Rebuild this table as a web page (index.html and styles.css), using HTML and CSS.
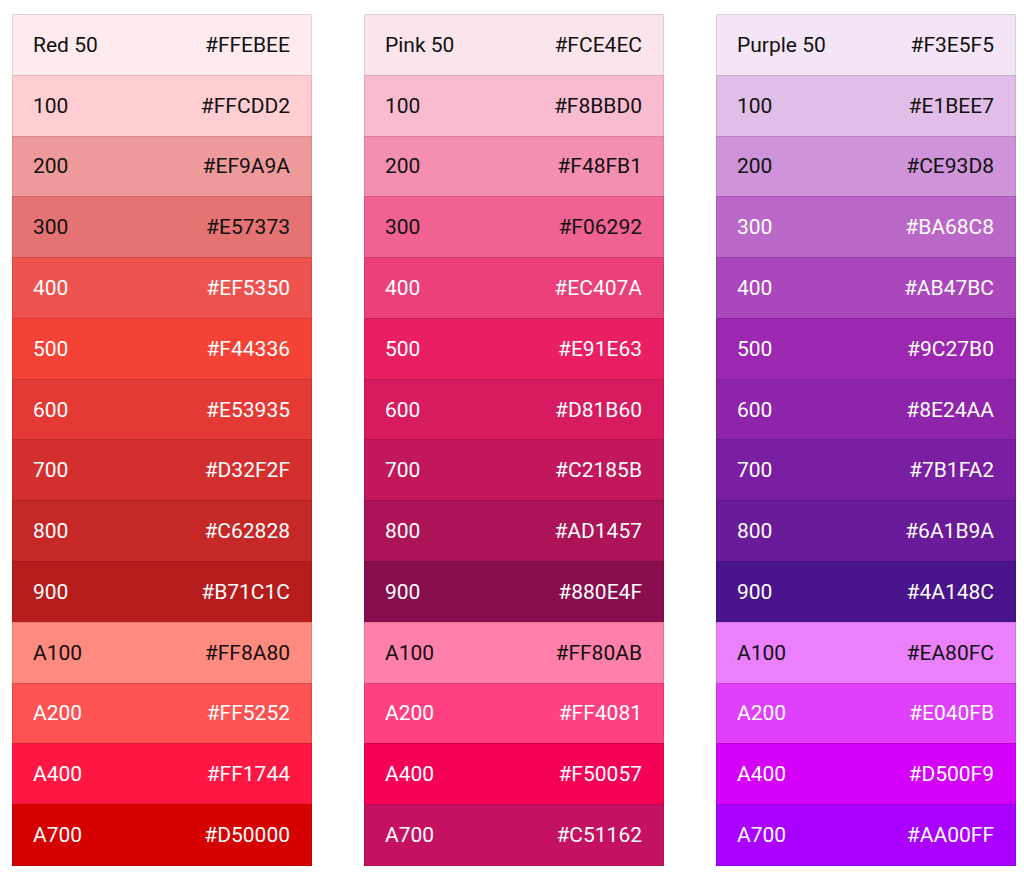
FILE: index.html
```html
<!DOCTYPE html>
<html lang="en">
<head>
    <meta charset="UTF-8">
    <meta name="viewport" content="width=device-width, initial-scale=1.0">
    <title>Material Colors</title>
    <link rel="stylesheet" href="styles.css">
</head>
<body>

    <div class="palette">
        <div class="column">
            <div class="swatch dark" style="background: #FFEBEE"><span>Red 50</span><span>#FFEBEE</span></div>
            <div class="swatch dark" style="background: #FFCDD2"><span>100</span><span>#FFCDD2</span></div>
            <div class="swatch dark" style="background: #EF9A9A"><span>200</span><span>#EF9A9A</span></div>
            <div class="swatch dark" style="background: #E57373"><span>300</span><span>#E57373</span></div>
            <div class="swatch light" style="background: #EF5350"><span>400</span><span>#EF5350</span></div>
            <div class="swatch light" style="background: #F44336"><span>500</span><span>#F44336</span></div>
            <div class="swatch light" style="background: #E53935"><span>600</span><span>#E53935</span></div>
            <div class="swatch light" style="background: #D32F2F"><span>700</span><span>#D32F2F</span></div>
            <div class="swatch light" style="background: #C62828"><span>800</span><span>#C62828</span></div>
            <div class="swatch light" style="background: #B71C1C"><span>900</span><span>#B71C1C</span></div>
            <div class="swatch dark" style="background: #FF8A80"><span>A100</span><span>#FF8A80</span></div>
            <div class="swatch light" style="background: #FF5252"><span>A200</span><span>#FF5252</span></div>
            <div class="swatch light" style="background: #FF1744"><span>A400</span><span>#FF1744</span></div>
            <div class="swatch light" style="background: #D50000"><span>A700</span><span>#D50000</span></div>
        </div>

        <div class="column">
            <div class="swatch dark" style="background: #FCE4EC"><span>Pink 50</span><span>#FCE4EC</span></div>
            <div class="swatch dark" style="background: #F8BBD0"><span>100</span><span>#F8BBD0</span></div>
            <div class="swatch dark" style="background: #F48FB1"><span>200</span><span>#F48FB1</span></div>
            <div class="swatch dark" style="background: #F06292"><span>300</span><span>#F06292</span></div>
            <div class="swatch light" style="background: #EC407A"><span>400</span><span>#EC407A</span></div>
            <div class="swatch light" style="background: #E91E63"><span>500</span><span>#E91E63</span></div>
            <div class="swatch light" style="background: #D81B60"><span>600</span><span>#D81B60</span></div>
            <div class="swatch light" style="background: #C2185B"><span>700</span><span>#C2185B</span></div>
            <div class="swatch light" style="background: #AD1457"><span>800</span><span>#AD1457</span></div>
            <div class="swatch light" style="background: #880E4F"><span>900</span><span>#880E4F</span></div>
            <div class="swatch dark" style="background: #FF80AB"><span>A100</span><span>#FF80AB</span></div>
            <div class="swatch light" style="background: #FF4081"><span>A200</span><span>#FF4081</span></div>
            <div class="swatch light" style="background: #F50057"><span>A400</span><span>#F50057</span></div>
            <div class="swatch light" style="background: #C51162"><span>A700</span><span>#C51162</span></div>
        </div>

        <div class="column">
            <div class="swatch dark" style="background: #F3E5F5"><span>Purple 50</span><span>#F3E5F5</span></div>
            <div class="swatch dark" style="background: #E1BEE7"><span>100</span><span>#E1BEE7</span></div>
            <div class="swatch dark" style="background: #CE93D8"><span>200</span><span>#CE93D8</span></div>
            <div class="swatch light" style="background: #BA68C8"><span>300</span><span>#BA68C8</span></div>
            <div class="swatch light" style="background: #AB47BC"><span>400</span><span>#AB47BC</span></div>
            <div class="swatch light" style="background: #9C27B0"><span>500</span><span>#9C27B0</span></div>
            <div class="swatch light" style="background: #8E24AA"><span>600</span><span>#8E24AA</span></div>
            <div class="swatch light" style="background: #7B1FA2"><span>700</span><span>#7B1FA2</span></div>
            <div class="swatch light" style="background: #6A1B9A"><span>800</span><span>#6A1B9A</span></div>
            <div class="swatch light" style="background: #4A148C"><span>900</span><span>#4A148C</span></div>
            <div class="swatch dark" style="background: #EA80FC"><span>A100</span><span>#EA80FC</span></div>
            <div class="swatch light" style="background: #E040FB"><span>A200</span><span>#E040FB</span></div>
            <div class="swatch light" style="background: #D500F9"><span>A400</span><span>#D500F9</span></div>
            <div class="swatch light" style="background: #AA00FF"><span>A700</span><span>#AA00FF</span></div>
        </div>
    </div>

</body>
</html>
```

FILE: styles.css
```css
* {
    margin: 0;
    padding: 0;
    box-sizing: border-box;
}

body {
    font-family: Roboto, "Liberation Sans", Arial, sans-serif;
    background: #ffffff;
}

.palette {
    display: flex;
    gap: 52px;
    padding: 14px 0 0 12px;
}

.column {
    width: 300px;
    height: 852px;
    display: flex;
    flex-direction: column;
}

.swatch {
    flex: 1;
    display: flex;
    justify-content: space-between;
    align-items: center;
    padding: 0 21px 0 20px;
    font-size: 21px;
    border: 1px solid rgba(0, 0, 0, 0.1);
    border-bottom: none;
}

.swatch:last-child {
    border-bottom: 1px solid rgba(0, 0, 0, 0.1);
}

.dark {
    color: #111111;
}

.light {
    color: #ffffff;
}
```
